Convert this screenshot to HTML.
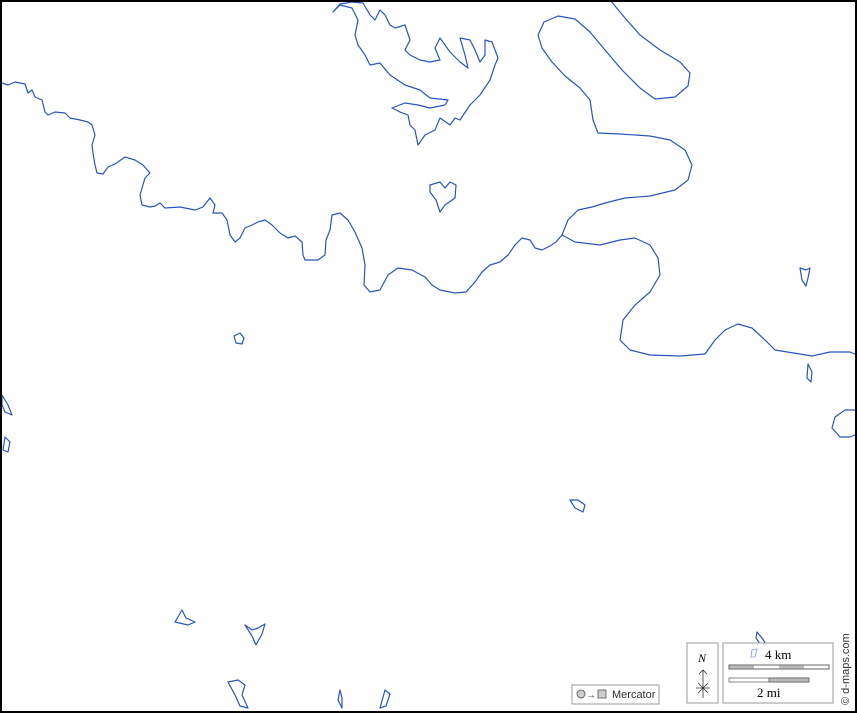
<!DOCTYPE html>
<html><head><style>
body{margin:0;background:#fff}
svg{display:block}
</style></head><body>
<svg width="857" height="713" viewBox="0 0 857 713" xmlns="http://www.w3.org/2000/svg">
<rect x="0" y="0" width="857" height="713" fill="#fff"/>
<g fill="none" stroke="#2a55c0" stroke-width="1.2" stroke-linejoin="round">
<path d="M2,83 L8,85 15,82 25,84 28,93 32,90 35,97 42,100 45,112 48,115 55,112 65,113 70,118 80,120 88,122 92,125 95,135 92,145 93,153 95,165 97,173 103,174 108,167 115,164 125,157 135,160 143,165 150,173 145,178 140,195 142,205 150,207 155,206 160,203 165,208 180,207 195,210 203,207 210,198 215,205 213,213 222,213 227,220 230,235 235,242 240,238 245,228 252,225 258,222 265,220 272,225 280,233 288,238 295,236 302,242 303,255 305,260 318,260 325,255 326,240 330,230 332,215 340,213 348,220 355,232 362,248 365,265 364,285 370,292 380,290 388,275 398,268 412,270 425,277 432,285 440,290 455,293 466,292 475,282 482,272 490,265 500,262 508,255 515,245 522,238 530,240 535,248 542,250 550,246 556,242 562,235 568,220 578,210 592,207 605,203 625,198 650,196 675,190 688,180 692,165 685,150 670,140 650,136 620,134 598,133 593,120 590,100 580,88 565,76 552,62 542,48 538,35 544,22 558,16 575,19 590,32 605,50 622,70 640,88 655,99 675,97 688,86 690,73 680,62 660,50 640,35 625,18 610,0"/>
<path d="M562,235 L575,242 600,245 620,240 635,238 650,245 658,258 660,275 650,292 635,305 623,320 620,340 630,350 650,355 680,356 705,354 715,340 725,330 738,324 752,328 765,340 775,350 800,354 812,356 830,352 850,352 857,355"/>
<path d="M857,410 L845,410 835,417 832,428 840,437 850,437 857,434"/>
<path d="M333,12 L340,5 352,8 358,20 355,35 358,45 365,55 370,65 380,63 390,75 405,85 420,90 430,98 448,100 445,105 430,108 418,105 405,103 392,108 400,112 408,115 410,125 415,130 418,145 425,135 435,130 440,118 450,125 455,118 460,120 470,105 480,95 490,80 495,65 498,58 492,42 485,40 485,55 480,62 475,50 470,40 460,38 465,55 468,68 460,62 450,52 440,38 435,48 440,60 430,62 420,60 410,55 405,50 410,40 405,25 395,28 390,25 385,15 380,10 375,20 370,15 363,3 352,2 340,4 333,12Z"/>
<path d="M430,185 L440,182 445,188 450,182 456,185 455,198 445,205 440,212 436,200 430,192Z"/>
<path d="M234,336 L240,333 244,338 242,344 236,343Z"/>
<path d="M800,268 L806,270 810,268 808,278 806,286 802,280Z"/>
<path d="M808,364 L812,372 811,382 807,378Z"/>
<path d="M2,395 L8,405 12,415 5,412 2,405Z"/>
<path d="M5,437 L10,442 8,452 3,450Z"/>
<path d="M570,500 L578,500 585,505 583,512 575,508Z"/>
<path d="M175,622 L182,610 186,618 195,622 188,625Z"/>
<path d="M245,625 L252,630 258,628 265,624 262,634 256,645 252,636Z"/>
<path d="M228,682 L238,680 245,685 242,695 248,708 240,706 235,695Z"/>
<path d="M340,690 L342,698 342,708 338,700Z"/>
<path d="M385,690 L390,694 386,706 380,708Z"/>
<path d="M757,632 L762,638 766,644 760,644 756,638Z"/>
</g>
<rect x="1" y="1" width="855" height="711" fill="none" stroke="#000" stroke-width="2"/>
<g font-family="Liberation Sans, sans-serif">
<rect x="572" y="685" width="87" height="19" fill="#fff" stroke="#999"/>
<circle cx="581" cy="694" r="4" fill="#ccc" stroke="#555" stroke-width="0.8"/>
<text x="586" y="698" font-size="10" fill="#333">→</text>
<rect x="598" y="690" width="8" height="8" fill="#ccc" stroke="#555" stroke-width="0.8"/>
<text x="612" y="698" font-size="11" fill="#333">Mercator</text>
<rect x="687" y="643" width="31" height="60" fill="#fff" stroke="#999"/>
<text x="698" y="662" font-size="12" font-style="italic" font-family="Liberation Serif, serif">N</text>
<path d="M703,670 V698 M699,674 L703,670 707,674 M696,688 H710 M698,683 L708,693 M708,683 L698,693" stroke="#333" stroke-width="0.8" fill="none"/>
<rect x="723" y="643" width="110" height="60" fill="#fff" stroke="#999"/>
<text x="765" y="659" font-size="13" font-family="Liberation Serif, serif">4 km</text>
<path d="M752,650 l5,-1 -2,8 -4,0z" fill="none" stroke="#7a9ae0" stroke-width="0.8"/>
<rect x="729" y="665" width="100" height="4" fill="#fff" stroke="#555" stroke-width="0.7"/>
<rect x="729" y="665" width="25" height="4" fill="#bbb"/><rect x="779" y="665" width="25" height="4" fill="#bbb"/>
<rect x="729" y="665" width="100" height="4" fill="none" stroke="#555" stroke-width="0.7"/>
<rect x="729" y="678" width="80" height="4" fill="#fff" stroke="#555" stroke-width="0.7"/>
<rect x="769" y="678" width="40" height="4" fill="#bbb" stroke="#555" stroke-width="0.7"/>
<text x="757" y="697" font-size="13" font-family="Liberation Serif, serif">2 mi</text>
<text transform="translate(849,705) rotate(-90)" font-size="11" fill="#333">© d-maps.com</text>
</g>
</svg>
</body></html>
